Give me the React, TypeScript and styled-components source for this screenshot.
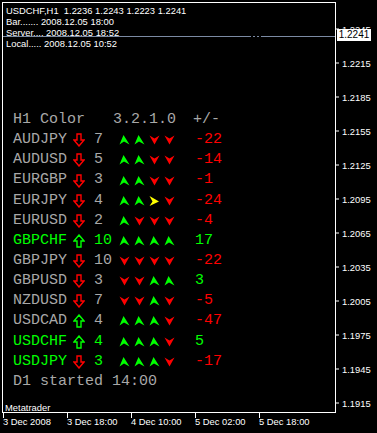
import styled, { createGlobalStyle } from "styled-components";

const GlobalStyle = createGlobalStyle`
  html, body {
    margin: 0;
    padding: 0;
    background: #000;
  }
`;

const GRAY = "#a8a8a8";
const GREEN = "#00ff00";
const RED = "#ff0000";
const YELLOW = "#ffff00";

const Page = styled.div`
  width: 377px;
  height: 433px;
  background: #000;
  display: grid;
  grid-template-columns: 336px 41px;
  grid-template-rows: 413px 20px;
  overflow: hidden;
  font-family: "Liberation Sans", Arial, sans-serif;
`;

const Chart = styled.div`
  position: relative;
  margin: 2px 0 0 2px;
  height: 411px;
  box-sizing: border-box;
  border: 1px solid #fff;
  display: flex;
  flex-direction: column;
`;

const Info = styled.div`
  padding: 2px 0 0 3px;
  color: #fff;
  font-size: 9.4px;
  line-height: 11px;
  white-space: pre;
`;

const PriceLine = styled.div`
  position: absolute;
  left: 0;
  right: 0;
  top: 33px;
  height: 1px;
  background: linear-gradient(
    to right,
    #7b8aa3 0 248px,
    transparent 248px 250px,
    #7b8aa3 250px 252px,
    transparent 252px 254px,
    #7b8aa3 254px 256px,
    transparent 256px 258px,
    #7b8aa3 258px
  );
`;

const Table = styled.div`
  margin-top: 61px;
  padding-left: 10px;
  font-family: "Liberation Mono", "Courier New", monospace;
  font-size: 15px;
  color: ${GRAY};
`;

const HeadRow = styled.div`
  display: grid;
  grid-template-columns: 100px 80px auto;
  height: 20.15px;
  line-height: 20.15px;
  white-space: pre;
`;

const Row = styled.div`
  display: grid;
  grid-template-columns: 60px 21px 25px 76px auto;
  align-items: center;
  height: 20.15px;
  line-height: 20.15px;
`;

const Cell = styled.span<{ $c?: string }>`
  color: ${(p) => p.$c || GRAY};
`;

const Signs = styled.div`
  display: flex;
  gap: 4px;
  align-items: center;
`;

const BigArrowBox = styled.span`
  display: flex;
  align-items: center;
`;

const Footer = styled.div`
  margin-top: auto;
  padding-left: 2px;
  color: #fff;
  font-size: 9.4px;
  line-height: 9px;
`;

const Axis = styled.div`
  position: relative;
  color: #fff;
  font-size: 9.4px;
`;

const Tick = styled.div`
  position: absolute;
  left: 0;
  display: flex;
  align-items: center;
  gap: 3px;
  transform: translateY(-50%);
  white-space: nowrap;
  &::before {
    content: "";
    width: 3px;
    height: 1px;
    background: #fff;
  }
`;

const PriceBox = styled.div`
  position: absolute;
  left: 1px;
  top: 29px;
  width: 34px;
  height: 12px;
  background: #fff;
  color: #000;
  font-size: 10px;
  line-height: 12px;
  text-align: center;
`;

const TimeAxis = styled.div`
  grid-column: 1 / 3;
  display: grid;
  grid-template-columns: repeat(5, 64px);
  padding-left: 3px;
  color: #fff;
  font-size: 9.4px;
`;

const TimeLabel = styled.div`
  position: relative;
  padding-top: 3px;
  white-space: nowrap;
  &::before {
    content: "";
    position: absolute;
    left: 0;
    top: 0;
    width: 1px;
    height: 5px;
    background: #fff;
  }
`;

type Sign = "u" | "d" | "r";

const Arrowhead = ({ s }: { s: Sign }) => {
  if (s === "u")
    return (
      <svg width="11" height="10" viewBox="0 0 11 10">
        <polygon points="4.5,0 10.5,9.5 5,6.5 0.5,9.5" fill={GREEN} />
      </svg>
    );
  if (s === "d")
    return (
      <svg width="11" height="10" viewBox="0 0 11 10">
        <polygon points="0.5,0.5 5.5,3.5 10.5,0.5 8,5 5.5,9.5 3,5" fill={RED} />
      </svg>
    );
  return (
    <svg width="11" height="10" viewBox="0 0 11 10">
      <polygon points="0.5,0 10,5.5 0.5,10 3.5,5.5" fill={YELLOW} />
    </svg>
  );
};

const BigArrow = ({ up }: { up: boolean }) => (
  <BigArrowBox>
    <svg width="12" height="14" viewBox="0 0 12 14">
      {up ? (
        <polygon
          points="6,1 11,7 8,7 8,13 4,13 4,7 1,7"
          fill="none"
          stroke={GREEN}
          strokeWidth="1.4"
        />
      ) : (
        <polygon
          points="4,1 8,1 8,7 11,7 6,13 1,7 4,7"
          fill="none"
          stroke={RED}
          strokeWidth="1.4"
        />
      )}
    </svg>
  </BigArrowBox>
);

type Pair = {
  name: string;
  green: boolean;
  up: boolean;
  n: number;
  signs: Sign[];
  v: number;
};

const pairs: Pair[] = [
  { name: "AUDJPY", green: false, up: false, n: 7, signs: ["u", "u", "d", "d"], v: -22 },
  { name: "AUDUSD", green: false, up: false, n: 5, signs: ["u", "u", "d", "d"], v: -14 },
  { name: "EURGBP", green: false, up: false, n: 3, signs: ["u", "u", "d", "d"], v: -1 },
  { name: "EURJPY", green: false, up: false, n: 4, signs: ["u", "u", "r", "d"], v: -24 },
  { name: "EURUSD", green: false, up: false, n: 2, signs: ["u", "d", "d", "d"], v: -4 },
  { name: "GBPCHF", green: true, up: true, n: 10, signs: ["u", "u", "u", "u"], v: 17 },
  { name: "GBPJPY", green: false, up: false, n: 10, signs: ["d", "d", "d", "d"], v: -22 },
  { name: "GBPUSD", green: false, up: false, n: 3, signs: ["d", "d", "u", "u"], v: 3 },
  { name: "NZDUSD", green: false, up: false, n: 7, signs: ["d", "d", "u", "d"], v: -5 },
  { name: "USDCAD", green: false, up: true, n: 4, signs: ["u", "u", "u", "d"], v: -47 },
  { name: "USDCHF", green: true, up: true, n: 4, signs: ["u", "u", "u", "d"], v: 5 },
  { name: "USDJPY", green: true, up: false, n: 3, signs: ["u", "u", "u", "d"], v: -17 },
];

const prices = [
  "1.2245", "1.2215", "1.2185", "1.2155", "1.2125", "1.2095",
  "1.2065", "1.2035", "1.2005", "1.1975", "1.1945", "1.1915",
];

const priceY = (p: string) => 36 + ((1.2241 - parseFloat(p)) / 0.003) * 34 - 2;

const times = ["3 Dec 2008", "3 Dec 18:00", "4 Dec 10:00", "5 Dec 02:00", "5 Dec 18:00"];

export default function App() {
  return (
    <Page>
      <GlobalStyle />
      <Chart>
        <Info>
          <div>{"USDCHF,H1  1.2236 1.2243 1.2223 1.2241"}</div>
          <div>Bar....... 2008.12.05 18:00</div>
          <div>Server.... 2008.12.05 18:52</div>
          <div>Local..... 2008.12.05 10:52</div>
        </Info>
        <PriceLine />
        <Table>
          <HeadRow>
            <span>H1 Color</span>
            <span>3.2.1.0</span>
            <span>+/-</span>
          </HeadRow>
          {pairs.map((p) => {
            const c = p.green ? GREEN : GRAY;
            return (
              <Row key={p.name}>
                <Cell $c={c}>{p.name}</Cell>
                <BigArrow up={p.up} />
                <Cell $c={c}>{p.n}</Cell>
                <Signs>
                  {p.signs.map((s, i) => (
                    <Arrowhead key={i} s={s} />
                  ))}
                </Signs>
                <Cell $c={p.v > 0 ? GREEN : RED}>{p.v}</Cell>
              </Row>
            );
          })}
          <HeadRow>
            <span>D1 started 14:00</span>
          </HeadRow>
        </Table>
        <Footer>Metatrader</Footer>
      </Chart>
      <Axis>
        {prices.map((p) => (
          <Tick key={p} style={{ top: priceY(p) }}>
            {p}
          </Tick>
        ))}
        <PriceBox>1.2241</PriceBox>
      </Axis>
      <TimeAxis>
        {times.map((t) => (
          <TimeLabel key={t}>{t}</TimeLabel>
        ))}
      </TimeAxis>
    </Page>
  );
}
